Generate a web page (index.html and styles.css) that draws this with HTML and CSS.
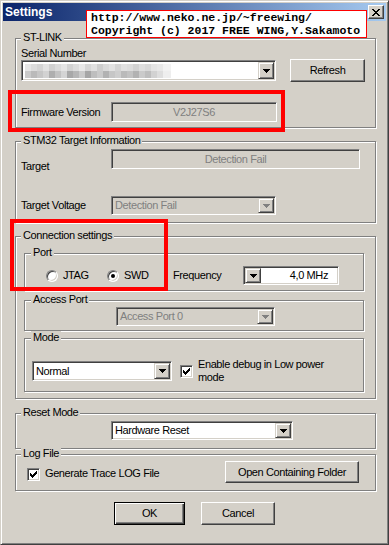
FILE: index.html
```html
<!DOCTYPE html>
<html lang="en">
<head>
<meta charset="utf-8">
<title>Settings</title>
<link rel="stylesheet" href="styles.css">
</head>
<body>
<div class="window">
  <div class="titlebar">
    <span class="title">Settings</span>
    <span class="close-btn"><svg width="8" height="7" viewBox="0 0 8 7"><path d="M0 0h2v1H0zM6 0h2v1H6zM1 1h2v1H1zM5 1h2v1H5zM2 2h4v1H2zM3 3h2v1H3zM2 4h4v1H2zM1 5h2v1H1zM5 5h2v1H5zM0 6h2v1H0zM6 6h2v1H6z"/></svg></span>
  </div>

  <div class="client">
    <div class="group g-stlink">
      <span class="legend">ST-LINK</span>
      <div class="lbl-top">Serial Number</div>
      <div class="serial-row">
        <div class="combo serial-combo">
          <div class="txt">
            <svg class="blur" width="146" height="14" viewBox="0 0 146 14">
              <rect x="0" y="0" width="6" height="7" fill="#e6e6e6"/><rect x="6" y="0" width="6" height="7" fill="#dcdcdc"/><rect x="12" y="0" width="6" height="7" fill="#d4d4d4"/><rect x="18" y="0" width="6" height="7" fill="#e2e2e2"/><rect x="24" y="0" width="6" height="7" fill="#d0d0d0"/><rect x="30" y="0" width="6" height="7" fill="#dadada"/><rect x="36" y="0" width="6" height="7" fill="#e4e4e4"/><rect x="42" y="0" width="6" height="7" fill="#d2d2d2"/><rect x="48" y="0" width="6" height="7" fill="#dcdcdc"/><rect x="54" y="0" width="6" height="7" fill="#e8e8e8"/><rect x="60" y="0" width="6" height="7" fill="#d6d6d6"/><rect x="66" y="0" width="6" height="7" fill="#e0e0e0"/><rect x="72" y="0" width="6" height="7" fill="#cecece"/><rect x="78" y="0" width="6" height="7" fill="#dadada"/><rect x="84" y="0" width="6" height="7" fill="#e2e2e2"/><rect x="90" y="0" width="6" height="7" fill="#d4d4d4"/><rect x="96" y="0" width="6" height="7" fill="#e0e0e0"/><rect x="102" y="0" width="6" height="7" fill="#dcdcdc"/><rect x="108" y="0" width="6" height="7" fill="#d2d2d2"/><rect x="114" y="0" width="6" height="7" fill="#dedede"/><rect x="120" y="0" width="6" height="7" fill="#d8d8d8"/><rect x="126" y="0" width="6" height="7" fill="#e4e4e4"/><rect x="132" y="0" width="6" height="7" fill="#e8e8e8"/><rect x="138" y="0" width="8" height="7" fill="#f2f2f2"/>
              <rect x="0" y="7" width="6" height="7" fill="#cacaca"/><rect x="6" y="7" width="6" height="7" fill="#bababa"/><rect x="12" y="7" width="6" height="7" fill="#c6c6c6"/><rect x="18" y="7" width="6" height="7" fill="#d2d2d2"/><rect x="24" y="7" width="6" height="7" fill="#aeaeae"/><rect x="30" y="7" width="6" height="7" fill="#c2c2c2"/><rect x="36" y="7" width="6" height="7" fill="#d4d4d4"/><rect x="42" y="7" width="6" height="7" fill="#a8a8a8"/><rect x="48" y="7" width="6" height="7" fill="#b6b6b6"/><rect x="54" y="7" width="6" height="7" fill="#cacaca"/><rect x="60" y="7" width="6" height="7" fill="#a6a6a6"/><rect x="66" y="7" width="6" height="7" fill="#bebebe"/><rect x="72" y="7" width="6" height="7" fill="#cacaca"/><rect x="78" y="7" width="6" height="7" fill="#b2b2b2"/><rect x="84" y="7" width="6" height="7" fill="#c6c6c6"/><rect x="90" y="7" width="6" height="7" fill="#cecece"/><rect x="96" y="7" width="6" height="7" fill="#bababa"/><rect x="102" y="7" width="6" height="7" fill="#c2c2c2"/><rect x="108" y="7" width="6" height="7" fill="#b2b2b2"/><rect x="114" y="7" width="6" height="7" fill="#cacaca"/><rect x="120" y="7" width="6" height="7" fill="#bebebe"/><rect x="126" y="7" width="6" height="7" fill="#d2d2d2"/><rect x="132" y="7" width="6" height="7" fill="#dedede"/><rect x="138" y="7" width="8" height="7" fill="#eeeeee"/>
            </svg>
          </div>
          <div class="arrow"><svg width="7" height="4" viewBox="0 0 7 4"><path d="M0 0h7v1H0zM1 1h5v1H1zM2 2h3v1H2zM3 3h1v1H3z"/></svg></div>
        </div>
        <div class="btn refresh">Refresh</div>
      </div>
      <div class="frow fw-row">
        <span class="lbl">Firmware Version</span>
        <div class="edit fw-edit">V2J27S6</div>
      </div>
    </div>

    <div class="group g-stm32">
      <span class="legend">STM32 Target Information</span>
      <div class="frow target-row">
        <span class="lbl target-lbl">Target</span>
        <div class="edit target-edit">Detection Fail</div>
      </div>
      <div class="frow volt-row">
        <span class="lbl">Target Voltage</span>
        <div class="combo disabled volt-combo">
          <div class="txt">Detection Fail</div>
          <div class="arrow"><svg width="7" height="4" viewBox="0 0 7 4"><path d="M0 0h7v1H0zM1 1h5v1H1zM2 2h3v1H2zM3 3h1v1H3z"/></svg></div>
        </div>
      </div>
    </div>

    <div class="group g-conn">
      <span class="legend">Connection settings</span>
      <div class="group inner g-port">
        <span class="legend">Port</span>
        <div class="port-row">
          <div class="radio-item jtag"><span class="radio"></span><span>JTAG</span></div>
          <div class="radio-item swd"><span class="radio checked"></span><span>SWD</span></div>
          <span class="freq-lbl">Frequency</span>
          <div class="combo freq-combo">
            <div class="arrow"><svg width="7" height="4" viewBox="0 0 7 4"><path d="M0 0h7v1H0zM1 1h5v1H1zM2 2h3v1H2zM3 3h1v1H3z"/></svg></div>
            <div class="txt right">4,0 MHz</div>
          </div>
        </div>
      </div>
      <div class="group inner g-access">
        <span class="legend">Access Port</span>
        <div class="combo disabled access-combo">
          <div class="txt">Access Port 0</div>
          <div class="arrow"><svg width="7" height="4" viewBox="0 0 7 4"><path d="M0 0h7v1H0zM1 1h5v1H1zM2 2h3v1H2zM3 3h1v1H3z"/></svg></div>
        </div>
      </div>
      <div class="group inner g-mode">
        <span class="legend">Mode</span>
        <div class="mode-row">
          <div class="combo mode-combo">
            <div class="txt">Normal</div>
            <div class="arrow"><svg width="7" height="4" viewBox="0 0 7 4"><path d="M0 0h7v1H0zM1 1h5v1H1zM2 2h3v1H2zM3 3h1v1H3z"/></svg></div>
          </div>
          <span class="check"><svg width="7" height="7" viewBox="0 0 7 7"><path d="M6 0h1v1H6zM5 1h2v1H5zM0 2h1v1H0zM4 2h3v1H4zM0 3h2v1H0zM3 3h3v1H3zM0 4h5v1H0zM1 5h3v1H1zM2 6h1v1H2z"/></svg></span>
          <span class="check-text">Enable debug in Low power<br>mode</span>
        </div>
      </div>
    </div>

    <div class="group g-reset">
      <span class="legend">Reset Mode</span>
      <div class="combo reset-combo">
        <div class="txt">Hardware Reset</div>
        <div class="arrow"><svg width="7" height="4" viewBox="0 0 7 4"><path d="M0 0h7v1H0zM1 1h5v1H1zM2 2h3v1H2zM3 3h1v1H3z"/></svg></div>
      </div>
    </div>

    <div class="group g-log">
      <span class="legend">Log File</span>
      <div class="log-row">
        <span class="check log-check"><svg width="7" height="7" viewBox="0 0 7 7"><path d="M6 0h1v1H6zM5 1h2v1H5zM0 2h1v1H0zM4 2h3v1H4zM0 3h2v1H0zM3 3h3v1H3zM0 4h5v1H0zM1 5h3v1H1zM2 6h1v1H2z"/></svg></span>
        <span class="log-text">Generate Trace LOG File</span>
        <div class="btn folder-btn">Open Containing Folder</div>
      </div>
    </div>

    <div class="dlg-buttons">
      <div class="btn default ok-btn">OK</div>
      <div class="btn cancel-btn">Cancel</div>
    </div>
  </div>

  <div class="note">http://www.neko.ne.jp/~freewing/<br>Copyright (c) 2017 FREE WING,Y.Sakamoto</div>
  <div class="hl hl-fw"></div>
  <div class="hl hl-conn"></div>
</div>
</body>
</html>
```

FILE: styles.css
```css
* { box-sizing: border-box; }
html, body { margin: 0; padding: 0; background: #d4d0c8; }
body {
  font-family: "Liberation Sans", Arial, sans-serif;
  font-size: 11px;
  letter-spacing: -0.4px;
  line-height: 13px;
  color: #000;
}

.window {
  position: relative;
  width: 389px;
  height: 545px;
  background: #d4d0c8;
  border: 1px solid;
  border-color: #d4d0c8 #404040 #404040 #d4d0c8;
  box-shadow: inset 1px 1px 0 #fff, inset -1px -1px 0 #808080;
  padding: 2px;
}

.titlebar {
  height: 18px;
  display: flex;
  align-items: center;
  justify-content: space-between;
  padding: 0 2px;
  background: linear-gradient(to right, #0a246a, #a6caf0);
}
.title {
  color: #fff;
  font-family: "Liberation Sans", Arial, sans-serif;
  font-weight: bold;
  font-size: 12px;
  letter-spacing: 0;
}
.close-btn {
  width: 16px;
  height: 14px;
  display: flex;
  align-items: center;
  justify-content: center;
  background: #d4d0c8;
  border: 1px solid;
  border-color: #fff #404040 #404040 #fff;
  box-shadow: inset -1px -1px 0 #808080;
}

.client { padding: 17px 10px 0 12px; }

/* group boxes */
.group {
  position: relative;
  border: 1px solid #808080;
  box-shadow: inset 1px 1px 0 #fff, 1px 1px 0 #fff;
}
.legend {
  position: absolute;
  top: -8px;
  left: 5px;
  padding: 0 2px;
  background: #d4d0c8;
  line-height: 13px;
  white-space: nowrap;
}
.inner .legend { left: 6px; }

/* sunken field */
.edit, .combo, .check, .radio {
  border: 1px solid;
  border-color: #808080 #fff #fff #808080;
  box-shadow: inset 1px 1px 0 #404040, inset -1px -1px 0 #d4d0c8;
}
.edit {
  display: flex;
  align-items: center;
  justify-content: center;
  background: #d4d0c8;
  color: #808080;
}
.combo {
  display: flex;
  background: #fff;
  padding: 1px;
}
.combo .txt {
  flex: 1;
  display: flex;
  align-items: center;
  padding-left: 2px;
  white-space: nowrap;
  overflow: hidden;
}
.combo .txt.right { justify-content: flex-end; padding-right: 9px; }
.combo.disabled { background: #d4d0c8; color: #808080; }
.combo.disabled .arrow svg { fill: #808080; }
.arrow {
  width: 16px;
  display: flex;
  align-items: center;
  justify-content: center;
  background: #d4d0c8;
  border: 1px solid;
  border-color: #d4d0c8 #404040 #404040 #d4d0c8;
  box-shadow: inset 1px 1px 0 #fff, inset -1px -1px 0 #808080;
}
.arrow svg { fill: #000; }

/* buttons */
.btn {
  display: flex;
  align-items: center;
  justify-content: center;
  background: #d4d0c8;
  border: 1px solid;
  border-color: #fff #404040 #404040 #fff;
  box-shadow: inset -1px -1px 0 #808080;
  white-space: nowrap;
}
.btn.default {
  border-color: #000;
  box-shadow: inset 1px 1px 0 #fff, inset -1px -1px 0 #404040, inset -2px -2px 0 #808080;
}

/* check & radio */
.check {
  width: 13px;
  height: 13px;
  flex: none;
  background: #fff;
  display: flex;
  align-items: center;
  justify-content: center;
}
.radio {
  position: relative;
  width: 12px;
  height: 12px;
  flex: none;
  border-radius: 50%;
  background: #fff;
}
.radio.checked::after {
  content: "";
  position: absolute;
  left: 3px;
  top: 3px;
  width: 4px;
  height: 4px;
  border-radius: 50%;
  background: #000;
}

/* ST-LINK */
.g-stlink { height: 90px; padding: 8px 0 0 5px; }
.lbl-top { line-height: 12px; height: 12px; }
.serial-row { display: flex; align-items: center; height: 23px; }
.serial-combo { width: 255px; height: 21px; }
.serial-combo .txt { padding-left: 2px; }
.refresh { width: 75px; height: 23px; margin-left: 14px; }
.frow { display: flex; align-items: center; }
.frow .lbl { width: 90px; flex: none; white-space: nowrap; }
.fw-row { margin-top: 20px; }
.fw-edit { width: 166px; height: 20px; }

/* STM32 */
.g-stm32 { height: 82px; margin-top: 13px; padding: 7px 0 0 5px; }
.target-row { align-items: flex-start; }
.target-lbl { margin-top: 11px; }
.target-edit { width: 249px; height: 20px; }
.volt-row { margin-top: 23px; }
.volt-combo { width: 165px; height: 19px; }

/* Connection */
.g-conn { height: 163px; margin-top: 13px; padding: 16px 0 0 8px; }
.inner { width: 340px; }
.g-port { height: 38px; }
.port-row { display: flex; align-items: center; height: 19px; margin-top: 12px; padding-left: 21px; }
.radio-item { display: flex; align-items: center; gap: 5px; }
.jtag { width: 61px; }
.swd { width: 66px; }
.freq-lbl { width: 70px; }
.freq-combo { width: 96px; height: 19px; }
.g-access { height: 31px; margin-top: 9px; }
.access-combo { width: 159px; height: 19px; margin: 6px 0 0 91px; }
.g-mode { height: 54px; margin-top: 7px; }
.mode-row { display: flex; align-items: center; margin: 19px 0 0 7px; }
.mode-combo { width: 140px; height: 20px; }
.mode-row .check { margin-left: 8px; }
.check-text { margin-left: 5px; line-height: 13px; }

/* Reset */
.g-reset { height: 36px; margin-top: 14px; padding: 0 0 0 5px; }
.reset-combo { width: 182px; height: 19px; margin: 7px 0 0 90px; }

/* Log */
.g-log { height: 37px; margin-top: 5px; }
.log-row { display: flex; align-items: flex-start; margin-top: 6px; padding-left: 11px; }
.log-check { margin-top: 7px; }
.log-text { margin: 6px 0 0 5px; }
.folder-btn { width: 134px; height: 22px; margin-left: auto; margin-right: 16px; }

/* dialog buttons */
.dlg-buttons { display: flex; justify-content: center; gap: 16px; margin-top: 11px; padding-right: 2px; }
.ok-btn { width: 71px; height: 23px; }
.cancel-btn { width: 74px; height: 23px; }

/* overlays */
.note {
  position: absolute;
  left: 85px;
  top: 9px;
  width: 281px;
  height: 28px;
  border: 1px solid #f00;
  background: #fff;
  padding-left: 4px;
  font-family: "Liberation Mono", "DejaVu Sans Mono", monospace;
  font-weight: bold;
  font-size: 11.5px;
  letter-spacing: 0;
  line-height: 13px;
  white-space: nowrap;
}
.hl {
  position: absolute;
  border: 4px solid #f00;
}
.hl-fw { left: 7px; top: 89px; width: 277px; height: 42px; }
.hl-conn { left: 9px; top: 218px; width: 158px; height: 72px; }
```
